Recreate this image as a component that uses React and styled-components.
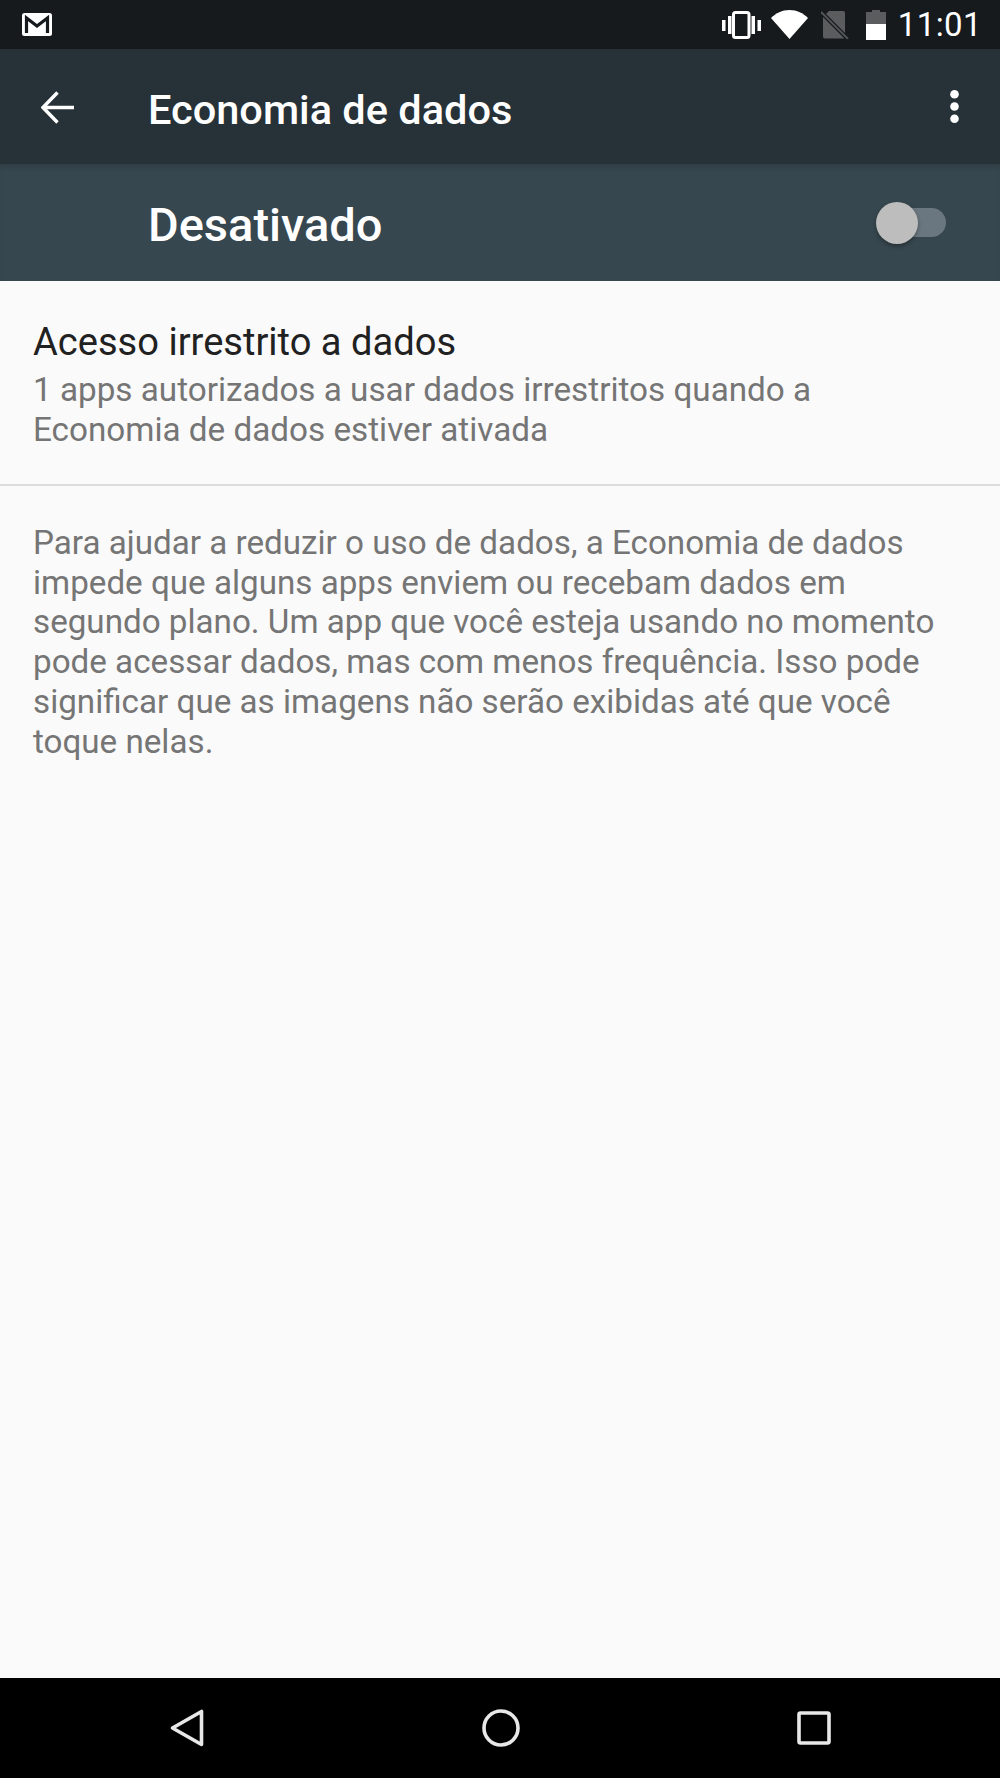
import React from "react";
import styled, { createGlobalStyle } from "styled-components";

const GlobalStyle = createGlobalStyle`
  html, body {
    margin: 0;
    padding: 0;
    background: #fafafa;
  }
  * {
    box-sizing: border-box;
  }
`;

const Screen = styled.div`
  width: 1000px;
  height: 1778px;
  display: flex;
  flex-direction: column;
  overflow: hidden;
  background: #fafafa;
  font-family: Roboto, "Liberation Sans", sans-serif;
`;

const StatusBar = styled.div`
  height: 49px;
  flex: none;
  display: flex;
  align-items: center;
  justify-content: space-between;
  padding: 0 18px 0 22px;
  background: #161a1d;
`;

const StatusIcons = styled.div`
  display: flex;
  align-items: center;
`;

const Clock = styled.span`
  margin-left: 12px;
  font-size: 33px;
  line-height: 49px;
  letter-spacing: 0.4px;
  color: #fff;
`;

const Toolbar = styled.div`
  height: 115px;
  flex: none;
  display: flex;
  align-items: center;
  padding: 0 41px 0 41px;
  background: #263238;
`;

const Title = styled.h1`
  flex: 1;
  margin: 0 0 0 74px;
  padding-top: 6px;
  font-size: 41.500px;
  font-weight: 500;
  color: #fff;
`;

const SwitchBar = styled.div`
  height: 117px;
  flex: none;
  display: flex;
  align-items: center;
  justify-content: space-between;
  padding: 0 54px 0 148px;
  background: #37474f;
  box-shadow: inset 0 6px 6px -4px rgba(0, 0, 0, 0.18);
`;

const SwitchLabel = styled.span`
  padding-top: 4px;
  font-size: 47px;
  font-weight: 500;
  color: #fff;
`;

const Switch = styled.div`
  position: relative;
  width: 60px;
  height: 29px;
  border-radius: 15px;
  background: #6b7780;
`;

const Thumb = styled.div`
  position: absolute;
  left: -10px;
  top: -6px;
  width: 42px;
  height: 42px;
  border-radius: 50%;
  background: #bdbdbd;
  box-shadow: 0 2px 4px rgba(0, 0, 0, 0.35);
`;

const Content = styled.div`
  flex: 1;
  background: #fafafa;
`;

const Row = styled.div`
  height: 205px;
  padding: 38px 33px 0;
  border-bottom: 2px solid #dcdcdc;
`;

const RowTitle = styled.div`
  font-size: 38.100px;
  line-height: 46px;
  color: #212121;
`;

const RowSummary = styled.div`
  margin-top: 5px;
  font-size: 33.250px;
  line-height: 39.700px;
  color: #757575;
`;

const Description = styled.p`
  margin: 0;
  padding: 37px 33px 0;
  font-size: 33.200px;
  line-height: 39.700px;
  color: #757575;
`;

const NavBar = styled.div`
  height: 100px;
  flex: none;
  display: flex;
  align-items: center;
  justify-content: space-between;
  padding: 0 169px 0 170px;
  background: #000;
`;

const GmailIcon = () => (
  <svg width="30" height="23" viewBox="0 0 30 23">
    <rect width="30" height="23" rx="2.500" fill="#fff" />
    <path d="M4.500 20V5l10.500 8 10.500-8v15" fill="none" stroke="#161a1d" strokeWidth="3.200" />
  </svg>
);

const VibrateIcon = () => (
  <svg width="39" height="28" viewBox="0 0 39 28" fill="#fff">
    <rect x="0" y="9" width="3.500" height="11" />
    <rect x="6" y="5" width="3.500" height="18" />
    <rect x="11.500" y="1.500" width="15.500" height="25" rx="2" fill="none" stroke="#fff" strokeWidth="3" />
    <rect x="29.500" y="5" width="3.500" height="18" />
    <rect x="35.500" y="9" width="3.500" height="11" />
  </svg>
);

const WifiIcon = () => (
  <svg width="37" height="29" viewBox="0 0 37 29" style={{ marginLeft: 10 }}>
    <path d="M0 8C5 3 11 0 18.500 0S32 3 37 8L18.500 29Z" fill="#fff" />
  </svg>
);

const NoSimIcon = () => (
  <svg width="28" height="28" viewBox="0 0 28 28" style={{ marginLeft: 13 }}>
    <path d="M8 0h14a2 2 0 0 1 2 2v24a1.500 1.500 0 0 1-1.500 1.500H4a2 2 0 0 1-2-2V6Z" fill="#5a5c5e" />
    <path d="M-1 0L28 29" stroke="#161a1d" strokeWidth="4.400" />
    <path d="M0 1L27 28" stroke="#55585a" strokeWidth="1.800" />
  </svg>
);

const BatteryIcon = () => (
  <svg width="20" height="30" viewBox="0 0 20 30" style={{ marginLeft: 17 }}>
    <path d="M6 0h8v2h6v13H0V2h6Z" fill="#5a5c5e" />
    <rect y="14" width="20" height="16" fill="#fff" />
  </svg>
);

const BackIcon = () => (
  <svg width="33" height="33" viewBox="0 0 33 33" style={{ marginTop: 1 }}>
    <path d="M33 16.500H3M16.500 1.500L2 16.500l14.500 15" fill="none" stroke="#fff" strokeWidth="3.400" />
  </svg>
);

const MoreIcon = () => (
  <svg width="9" height="33" viewBox="0 0 9 33" fill="#fff">
    <circle cx="4.500" cy="4.300" r="4.300" />
    <circle cx="4.500" cy="16.500" r="4.300" />
    <circle cx="4.500" cy="28.700" r="4.300" />
  </svg>
);

const NavBack = () => (
  <svg width="34" height="38" viewBox="0 0 34 38">
    <path d="M31.500 2.500V35.500L2.500 19Z" fill="none" stroke="#e8e8e8" strokeWidth="3.600" strokeLinejoin="round" />
  </svg>
);

const NavHome = () => (
  <svg width="38" height="38" viewBox="0 0 38 38">
    <circle cx="19" cy="19" r="17" fill="none" stroke="#e8e8e8" strokeWidth="3.600" />
  </svg>
);

const NavRecent = () => (
  <svg width="34" height="34" viewBox="0 0 34 34">
    <rect x="2" y="2" width="30" height="30" rx="1.500" fill="none" stroke="#e8e8e8" strokeWidth="3.600" />
  </svg>
);

const App = () => {
  return (
    <Screen>
      <GlobalStyle />
      <StatusBar>
        <GmailIcon />
        <StatusIcons>
          <VibrateIcon />
          <WifiIcon />
          <NoSimIcon />
          <BatteryIcon />
          <Clock>11:01</Clock>
        </StatusIcons>
      </StatusBar>
      <Toolbar>
        <BackIcon />
        <Title>Economia de dados</Title>
        <MoreIcon />
      </Toolbar>
      <SwitchBar>
        <SwitchLabel>Desativado</SwitchLabel>
        <Switch>
          <Thumb />
        </Switch>
      </SwitchBar>
      <Content>
        <Row>
          <RowTitle>Acesso irrestrito a dados</RowTitle>
          <RowSummary>
            1 apps autorizados a usar dados irrestritos quando a
            <br />
            Economia de dados estiver ativada
          </RowSummary>
        </Row>
        <Description>
          Para ajudar a reduzir o uso de dados, a Economia de dados
          <br />
          impede que alguns apps enviem ou recebam dados em
          <br />
          segundo plano. Um app que você esteja usando no momento
          <br />
          pode acessar dados, mas com menos frequência. Isso pode
          <br />
          significar que as imagens não serão exibidas até que você
          <br />
          toque nelas.
        </Description>
      </Content>
      <NavBar>
        <NavBack />
        <NavHome />
        <NavRecent />
      </NavBar>
    </Screen>
  );
};

export default App;
